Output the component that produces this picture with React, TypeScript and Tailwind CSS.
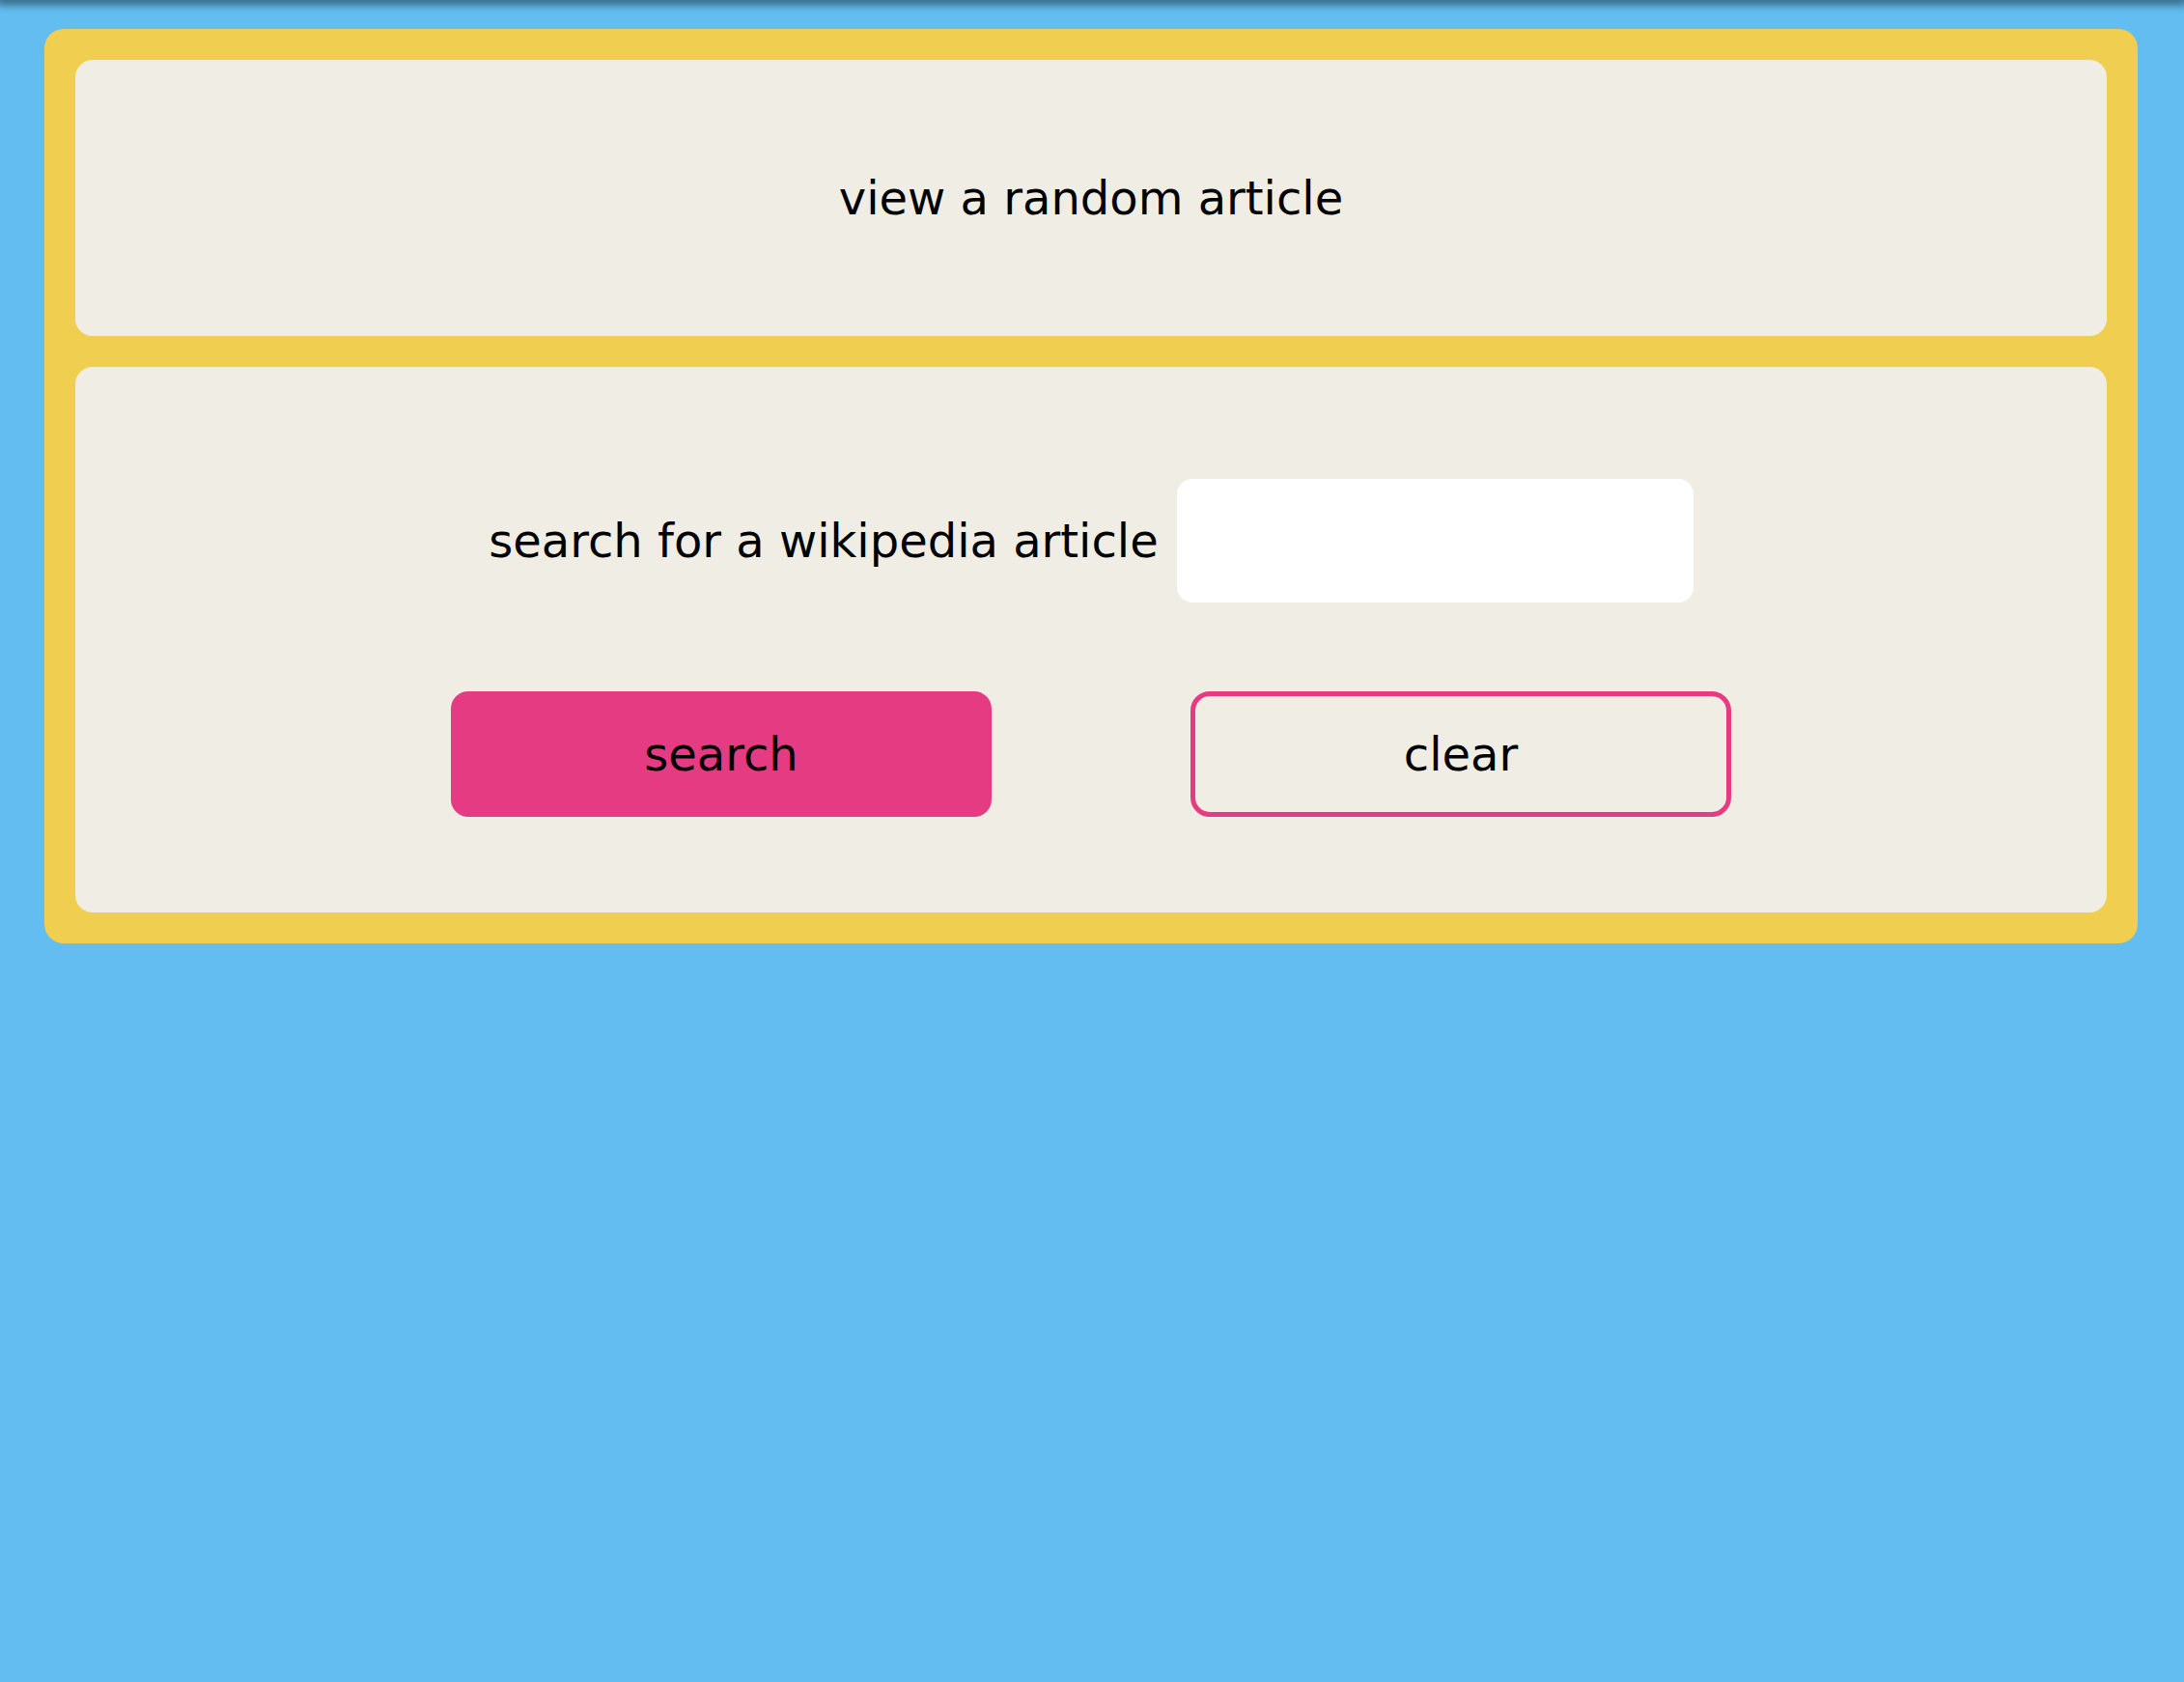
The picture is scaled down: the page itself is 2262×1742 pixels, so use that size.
import { useState } from 'react';

const App = () => {
  const [query, setQuery] = useState('');

  return (
    <div
      className="flex min-h-screen flex-col bg-[#63bdf1] text-black"
      style={{ fontFamily: '"DejaVu Sans", Verdana, sans-serif' }}
    >
      {/* header strip: only its shadow shows */}
      <div className="h-0 w-full shrink-0 shadow-[0_0_10px_4px_rgba(0,0,0,0.6)]" />

      <main className="ml-[46px] mr-[48px] mt-[30px] flex flex-col gap-[32px] rounded-[20px] bg-[#f0ce50] p-[32px]">
        <section className="flex h-[286px] items-center justify-center rounded-[18px] bg-[#f0eee4]">
          <a href="#" className="text-[48px] leading-none">
            view a random article
          </a>
        </section>

        <section className="flex flex-col items-center gap-[92px] rounded-[18px] bg-[#f0eee4] pb-[99px] pt-[116px]">
          <div className="flex items-center gap-[19px]">
            <label htmlFor="query" className="text-[48px] leading-none">
              search for a wikipedia article
            </label>
            <input
              id="query"
              type="text"
              value={query}
              onChange={(e) => setQuery(e.target.value)}
              className="h-[128px] w-[535px] rounded-[16px] bg-white px-4 text-[48px] outline-none"
            />
          </div>

          <div className="flex items-center gap-[206px]">
            <button className="flex h-[130px] w-[560px] items-center justify-center rounded-[18px] bg-[#e53b82] text-[48px]">
              search
            </button>
            <button
              onClick={() => setQuery('')}
              className="flex h-[130px] w-[560px] items-center justify-center rounded-[20px] border-[5px] border-[#e53b82] text-[48px]"
            >
              clear
            </button>
          </div>
        </section>
      </main>
    </div>
  );
};

export default App;
